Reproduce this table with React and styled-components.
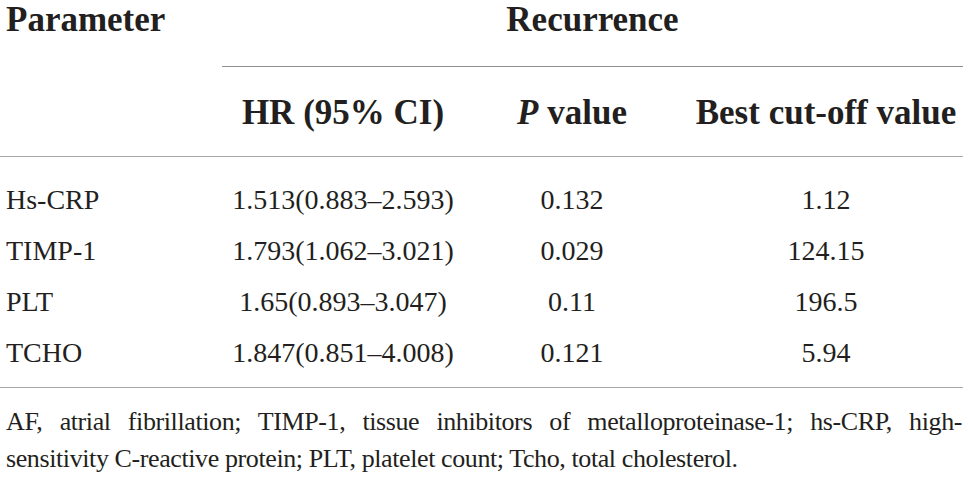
import styled, { createGlobalStyle } from "styled-components";

const GlobalStyle = createGlobalStyle`
  body {
    margin: 0;
    background: #ffffff;
  }
`;

const rows = [
  { name: "Hs-CRP", hr: "1.513(0.883–2.593)", p: "0.132", cut: "1.12" },
  { name: "TIMP-1", hr: "1.793(1.062–3.021)", p: "0.029", cut: "124.15" },
  { name: "PLT", hr: "1.65(0.893–3.047)", p: "0.11", cut: "196.5" },
  { name: "TCHO", hr: "1.847(0.851–4.008)", p: "0.121", cut: "5.94" },
];

export default function App() {
  return (
    <Page>
      <GlobalStyle />
      <Table>
        <HeadGrid>
          <HeadCell $first $left>
            Parameter
          </HeadCell>
          <HeadCell $first $span={3} $rule>
            Recurrence
          </HeadCell>
          <HeadCell />
          <HeadCell>HR (95% CI)</HeadCell>
          <HeadCell>
            <em>P</em> value
          </HeadCell>
          <HeadCell>Best cut-off value</HeadCell>
        </HeadGrid>
        <Body>
          {rows.map((r) => (
            <Row key={r.name}>
              <Cell $left>{r.name}</Cell>
              <Cell>{r.hr}</Cell>
              <Cell>{r.p}</Cell>
              <Cell>{r.cut}</Cell>
            </Row>
          ))}
        </Body>
      </Table>
      <Note>
        <NoteLine $justify>
          AF, atrial fibrillation; TIMP-1, tissue inhibitors of
          metalloproteinase-1; hs-CRP, high-
        </NoteLine>
        <NoteLine>
          sensitivity C-reactive protein; PLT, platelet count; Tcho, total
          cholesterol.
        </NoteLine>
      </Note>
    </Page>
  );
}

const Page = styled.div`
  width: 968px;
  font-family: "Liberation Serif", "Times New Roman", serif;
  color: #231f20;
`;

const Table = styled.div`
  width: 963px;
`;

const columns = "222px 242px 216px 283px";

const HeadGrid = styled.div`
  display: grid;
  grid-template-columns: ${columns};
  border-bottom: 1px solid #a8a8a8;

  & > :last-child {
    padding-left: 9px;
  }
`;

const HeadCell = styled.div`
  grid-column: span ${(p) => p.$span || 1};
  font-size: 35px;
  font-weight: 700;
  line-height: ${(p) => (p.$first ? "39px" : "34px")};
  white-space: nowrap;
  text-align: ${(p) => (p.$left ? "left" : "center")};
  padding: ${(p) => (p.$first ? "0 0 27px" : "29px 0 26px")};
  padding-left: ${(p) => (p.$left ? "6px" : "0")};
  border-bottom: ${(p) => (p.$rule ? "1px solid #8f8f8f" : "none")};

  em {
    font-style: italic;
  }
`;

const Body = styled.div`
  padding: 17px 0 9px;
  border-bottom: 1px solid #a8a8a8;
`;

const Row = styled.div`
  display: grid;
  grid-template-columns: ${columns};

  & > :last-child {
    padding-left: 9px;
  }
`;

const Cell = styled.div`
  font-size: 28px;
  line-height: 51px;
  white-space: nowrap;
  text-align: ${(p) => (p.$left ? "left" : "center")};
  padding-left: ${(p) => (p.$left ? "6px" : "0")};
`;

const Note = styled.div`
  width: 956px;
  margin: 15px 0 0 6px;
  font-size: 26px;
  line-height: 37px;
  letter-spacing: -0.4px;
`;

const NoteLine = styled.div`
  text-align: ${(p) => (p.$justify ? "justify" : "left")};
  text-align-last: ${(p) => (p.$justify ? "justify" : "left")};
`;
